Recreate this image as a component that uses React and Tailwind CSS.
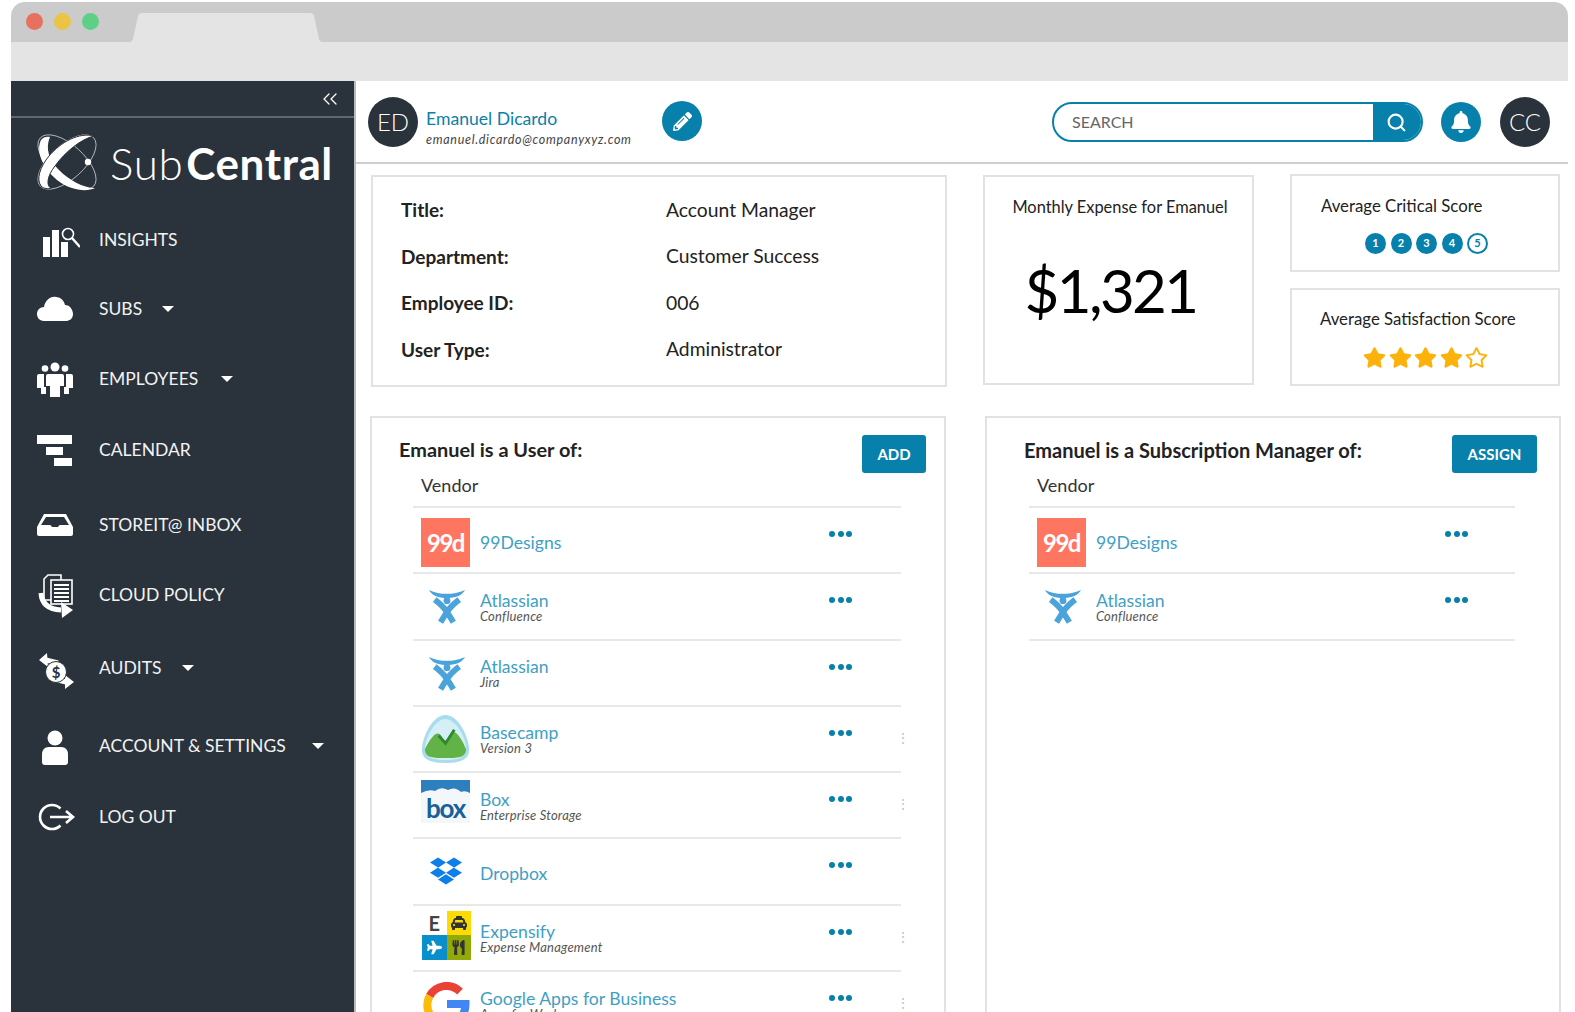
import { ChevronsLeft, Search } from 'lucide-react';
import { FaBell, FaDropbox, FaPencilAlt, FaPlane, FaStar, FaRegStar, FaTaxi, FaUtensils } from 'react-icons/fa';

const DARK = '#2a323b';

function SubLogo() {
  return (
    <svg viewBox="0 0 75 75" className="w-[75px] h-[75px] shrink-0">
      <ellipse cx="36" cy="38" rx="36" ry="17" transform="rotate(-42 36 38)" fill="none" stroke="#c9ccd0" strokeWidth="0.8" />
      <ellipse cx="36" cy="38" rx="36" ry="17" transform="rotate(42 36 38)" fill="none" stroke="#c9ccd0" strokeWidth="0.8" />
      <path d="M10 16 C5 26 10 42 26 56 C40 67 56 68 64 64 C52 64 38 56 28 46 C18 36 14 24 19 13 C16 12 12 13 10 16Z" fill="#fff" />
      <path d="M63 12 C48 8 30 18 18 32 C9 43 5 55 10 62 C13 65 17 65 20 64 C15 62 16 52 24 42 C34 28 50 15 63 12Z" fill="#fff" stroke={DARK} strokeWidth="1" />
      <circle cx="57" cy="38" r="3.2" fill="#fff" />
    </svg>
  );
}

function NavIcon({ name }) {
  if (name === 'insights') return (
    <svg viewBox="0 0 44 44" className="w-[44px] h-[44px] shrink-0" fill="#fff">
      <rect x="7" y="19" width="7" height="20" />
      <rect x="16" y="12" width="7" height="27" />
      <rect x="25" y="24" width="7" height="15" />
      <circle cx="32" cy="16" r="5.5" fill={DARK} stroke="#fff" strokeWidth="1.6" />
      <path d="M36 20 L44 29" stroke="#fff" strokeWidth="2.4" />
    </svg>
  );
  if (name === 'subs') return (
    <svg viewBox="0 0 44 44" className="w-[44px] h-[44px] shrink-0" fill="#fff">
      <path d="M8 34 C3 34 1 30 1 27 C1 23 4 20 8 20 C9 14 14 9 20 10 C25 10 28 14 29 18 C34 18 37 23 37 27 C37 32 33 34 30 34Z" />
    </svg>
  );
  if (name === 'employees') return (
    <svg viewBox="0 0 44 44" className="w-[44px] h-[44px] shrink-0" fill="#fff">
      <circle cx="19" cy="10" r="4.5" />
      <circle cx="9" cy="11.5" r="3.3" />
      <circle cx="29" cy="11.5" r="3.3" />
      <path d="M12 17 H26 Q28 17 28 19 V29 H24 V40 H14 V29 H10 V19 Q10 17 12 17Z" />
      <path d="M3 17 H8 V30 H10 V37 H5 V31 H1 V19 Q1 17 3 17Z" />
      <path d="M35 17 H30 V30 H28 V37 H33 V31 H37 V19 Q37 17 35 17Z" />
    </svg>
  );
  if (name === 'calendar') return (
    <svg viewBox="0 0 44 44" className="w-[44px] h-[44px] shrink-0" fill="#fff">
      <rect x="1" y="7" width="35" height="9" />
      <rect x="10" y="19" width="17" height="8" />
      <rect x="18" y="30" width="18" height="8" />
    </svg>
  );
  if (name === 'inbox') return (
    <svg viewBox="0 0 44 44" className="w-[44px] h-[44px] shrink-0">
      <path d="M8 11 H30 L37 24 V31 Q37 33 35 33 H3 Q1 33 1 31 V24Z" fill="#fff" />
      <path d="M10 14 H28 L33 22 H24 Q23 22 22 24 H16 Q15 22 14 22 H5Z" fill={DARK} />
    </svg>
  );
  if (name === 'policy') return (
    <svg viewBox="0 0 44 50" className="w-[44px] h-[50px] shrink-0">
      <path d="M8 9 L12 5 H25 V30 H8Z" fill={DARK} stroke="#fff" strokeWidth="1.6" />
      <rect x="15" y="10" width="21" height="24" fill={DARK} stroke="#fff" strokeWidth="1.6" />
      <path d="M18 15 H33 M18 19 H33 M18 23 H33 M18 27 H33 M18 31 H33" stroke="#fff" strokeWidth="2" />
      <path d="M5 23 Q6 39 25 40" fill="none" stroke="#fff" strokeWidth="5" />
      <path d="M25 32 L37 40 L26 48Z" fill="#fff" />
    </svg>
  );
  if (name === 'audits') return (
    <svg viewBox="0 0 44 44" className="w-[44px] h-[44px] shrink-0">
      <path d="M10 14 L22 17 M18 33 L30 36" stroke="#fff" strokeWidth="5" />
      <path d="M3 14 L11 7 L12 21Z M38 36 L29 29 L29 43Z" fill="#fff" />
      <circle cx="20" cy="26" r="10.5" fill="#fff" stroke={DARK} strokeWidth="1" />
      <text x="20" y="31.5" textAnchor="middle" fontSize="15" fontWeight="700" fill={DARK} fontFamily="Lato, sans-serif">$</text>
    </svg>
  );
  if (name === 'account') return (
    <svg viewBox="0 0 44 44" className="w-[44px] h-[44px] shrink-0" fill="#fff">
      <circle cx="19" cy="14" r="7.5" />
      <path d="M13 23 H25 Q32 23 32 31 V38 Q32 41 29 41 H9 Q6 41 6 38 V31 Q6 23 13 23Z" />
    </svg>
  );
  return (
    <svg viewBox="0 0 44 44" className="w-[44px] h-[44px] shrink-0" fill="none" stroke="#fff" strokeWidth="2.6">
      <path d="M24.5 13.5 A12 12 0 1 0 24.5 30.5" />
      <path d="M14 22 H36 M30 16 L37 22 L30 28" />
    </svg>
  );
}

const NAV = [
  { icon: 'insights', label: 'INSIGHTS', cls: 'mt-[19px]' },
  { icon: 'subs', label: 'SUBS', caret: 'ml-[1px]', cls: 'mt-[25px]' },
  { icon: 'employees', label: 'EMPLOYEES', caret: 'ml-[4px]', cls: 'mt-[26px]' },
  { icon: 'calendar', label: 'CALENDAR', cls: 'mt-[27px]' },
  { icon: 'inbox', label: 'STOREIT@ INBOX', cls: 'mt-[31px]' },
  { icon: 'policy', label: 'CLOUD POLICY', cls: 'mt-[26px]' },
  { icon: 'audits', label: 'AUDITS', caret: 'ml-[2px]', cls: 'mt-[29px]' },
  { icon: 'account', label: 'ACCOUNT & SETTINGS', caret: 'ml-[7px]', cls: 'mt-[34px]' },
  { icon: 'logout', label: 'LOG OUT', cls: 'mt-[27px]' },
];

function Sidebar() {
  return (
    <aside className="w-[345px] shrink-0 bg-[#2a323b] border-r-2 border-[#b9bbbd] text-white">
      <div className="h-[37px] flex items-center justify-end pr-[12px] border-b-2 border-[#62676d]">
        <ChevronsLeft size={24} strokeWidth={1.3} />
      </div>
      <div className="flex items-center pl-[20px] mt-[6px] h-[75px]">
        <SubLogo />
        <div className="ml-[4px] mt-[3px] text-[44px] leading-none tracking-[0.6px]">
          <span className="font-light">Sub</span><span className="font-bold ml-[3px]">Central</span>
        </div>
      </div>
      <nav>
        {NAV.map(n => (
          <div key={n.label} className={`${n.cls} h-[44px] flex items-center pl-[25px] gap-[19px]`}>
            <NavIcon name={n.icon} />
            <span className="text-[17.5px] text-[#f2f3f4] whitespace-nowrap">{n.label}</span>
            {n.caret && <span className={`${n.caret} w-0 h-0 border-x-[6px] border-x-transparent border-t-[6px] border-t-white`} />}
          </div>
        ))}
      </nav>
    </aside>
  );
}

function Avatar({ text }) {
  return (
    <div className="w-[50px] h-[50px] rounded-full bg-[#2a323b] text-white flex items-center justify-center text-[24px] font-light shrink-0">
      {text}
    </div>
  );
}

function Header() {
  return (
    <header className="h-[83px] pt-[1px] border-b-2 border-[#cfcfcf] flex items-center pl-[12px] pr-[18px]">
      <Avatar text="ED" />
      <div className="ml-[8px] mt-[12px] w-[236px]">
        <div className="text-[17.6px] leading-[22px] text-[#0a80ab]">Emanuel Dicardo</div>
        <div className="text-[12.5px] leading-[19px] italic text-[#444] tracking-[0.7px]">emanuel.dicardo@companyxyz.com</div>
      </div>
      <div className="w-[40px] h-[40px] -mt-[2px] rounded-full bg-[#0780ab] text-white flex items-center justify-center">
        <FaPencilAlt size={19} />
      </div>
      <div className="ml-auto w-[371px] h-[40px] rounded-full border-2 border-[#0780ab] flex overflow-hidden">
        <div className="flex-1 pl-[18px] flex items-center text-[16px] text-[#666]">SEARCH</div>
        <div className="w-[48px] bg-[#0780ab] text-white flex items-center pl-[13px]">
          <Search size={21} strokeWidth={2.4} />
        </div>
      </div>
      <div className="ml-[18px] w-[40px] h-[40px] rounded-full bg-[#0780ab] text-white flex items-center justify-center">
        <FaBell size={22} />
      </div>
      <div className="ml-[19px]"><Avatar text="CC" /></div>
    </header>
  );
}

const FIELDS = [
  ['Title:', 'Account Manager'],
  ['Department:', 'Customer Success'],
  ['Employee ID:', '006'],
  ['User Type:', 'Administrator'],
];

function InfoCards() {
  return (
    <div className="flex items-start pl-[15px] pt-[10px]">
      <div className="w-[576px] h-[212px] mt-px border-2 border-[#e2e2e2] pl-[28px] pt-[10px]">
        {FIELDS.map(([k, v]) => (
          <div key={k} className="flex h-[46.5px] items-center text-[#222]">
            <span className="w-[265px] text-[19px] font-bold">{k}</span>
            <span className="text-[19.3px]">{v}</span>
          </div>
        ))}
      </div>
      <div className="ml-[36px] w-[271px] h-[210px] mt-px border-2 border-[#e2e2e2] text-center">
        <div className="mt-[18px] pl-[3px] text-[16.4px] text-[#222]">Monthly Expense for Emanuel</div>
        <div className="mt-[30px] text-[60px] leading-[80px] tracking-[-2.6px] text-black pr-[16px]">$1,321</div>
      </div>
      <div className="ml-[36px] w-[270px]">
        <div className="h-[98px] border-2 border-[#e2e2e2] pl-[29px] pt-[17px]">
          <div className="text-[16.8px] text-[#222]">Average Critical Score</div>
          <div className="mt-[15px] ml-[44px] flex gap-[4.5px]">
            {[1, 2, 3, 4].map(n => (
              <span key={n} className="w-[21px] h-[21px] rounded-full bg-[#0780ab] text-white text-[11px] font-bold flex items-center justify-center">{n}</span>
            ))}
            <span className="w-[21px] h-[21px] rounded-full border-2 border-[#0780ab] text-[#0780ab] text-[11px] font-bold flex items-center justify-center">5</span>
          </div>
        </div>
        <div className="mt-[16px] h-[98px] border-2 border-[#e2e2e2] pl-[28px] pt-[16px]">
          <div className="text-[16.8px] text-[#222]">Average Satisfaction Score</div>
          <div className="mt-[15px] ml-[43px] flex gap-[2.5px] text-[#fcb20b]">
            {[1, 2, 3, 4].map(n => <FaStar key={n} size={23} />)}
            <FaRegStar size={23} />
          </div>
        </div>
      </div>
    </div>
  );
}

function AtlassianLogo() {
  return (
    <svg viewBox="0 0 50 50" className="w-[49px] h-[49px]">
      <path d="M8 6 Q26 14 45 6 Q42 11 36 13 Q26 16 17 13 Q11 11 8 6Z" fill="#4ba3dc" />
      <circle cx="26.5" cy="17" r="3.5" fill="#4ba3dc" />
      <path d="M14 16 Q22 22 26 28 Q30 34 33 39 M39 16 Q31 22 27 28 Q23 34 20 39" fill="none" stroke="#4ba3dc" strokeWidth="6" />
    </svg>
  );
}

function BasecampLogo() {
  return (
    <svg viewBox="0 0 50 50" className="w-[49px] h-[49px] -mt-[2px]">
      <path d="M25 0 C38 0 49 22 49 36 C49 46 39 49 25 49 C11 49 1 46 1 36 C1 22 12 0 25 0Z" fill="#a9dcec" />
      <path d="M25 4 C35 4 46 22 46 35 C46 44 37 46 25 46 C13 46 4 44 4 35 C4 22 15 4 25 4Z" fill="#d5eff6" />
      <path d="M4 35 C8 27 13 19 17 19 C21 19 22 26 25 26 C28 26 29 17 33 17 C37 17 43 27 46 35 C46 44 37 44 25 44 C13 44 4 44 4 35Z" fill="#62b347" />
      <path d="M18 21 L25 29 L34 15" fill="none" stroke="#2f8a2e" strokeWidth="3" />
    </svg>
  );
}

function BoxLogo() {
  return (
    <div className="w-[49px] h-[43px] -mt-[3px] bg-[#f4f7f9] overflow-hidden">
      <svg viewBox="0 0 49 43" className="w-[49px] h-[43px]">
        <path d="M0 0 H49 V13 Q44 10 40 12 Q34 6 27 10 Q20 6 14 11 Q8 9 0 13Z" fill="#2e7fbd" />
        <text x="24.5" y="38" textAnchor="middle" fontSize="26" fontWeight="700" fill="#17609b" letterSpacing="-1.2" fontFamily="Lato, sans-serif">box</text>
      </svg>
    </div>
  );
}

function ExpensifyLogo() {
  return (
    <div className="w-[49px] h-[49px] -mt-[5px] ml-[1px] grid grid-cols-2 grid-rows-2 text-white">
      <span className="flex items-center justify-center text-[#444] text-[20px] font-bold">E</span>
      <span className="flex items-center justify-center bg-[#fbdb03] text-[#333]"><FaTaxi size={16} /></span>
      <span className="flex items-center justify-center bg-[#0b8fcb]"><FaPlane size={15} /></span>
      <span className="flex items-center justify-center bg-[#93a908] text-[#333]"><FaUtensils size={15} /></span>
    </div>
  );
}

function GoogleLogo() {
  return (
    <svg viewBox="0 0 49 49" className="w-[49px] h-[49px] ml-[2px]" fill="none" strokeWidth="8">
      <path d="M37 9.6 A19 19 0 0 0 6.7 14" stroke="#ea4335" />
      <path d="M6.7 14 A19 19 0 0 0 6.7 32" stroke="#fbbc05" />
      <path d="M6.7 32 A19 19 0 0 0 37 36.4" stroke="#34a853" />
      <path d="M24 22 H42.5 Q42.5 31 37 36.4" stroke="#4285f4" />
    </svg>
  );
}

function VendorLogo({ type }) {
  if (type === '99d') return (
    <div className="w-[49px] h-[49px] bg-[#fe7560] text-white flex items-center justify-center text-[24px] font-bold tracking-[-1.5px]">99d</div>
  );
  if (type === 'atlassian') return <AtlassianLogo />;
  if (type === 'basecamp') return <BasecampLogo />;
  if (type === 'box') return <BoxLogo />;
  if (type === 'dropbox') return <div className="w-[49px] h-[49px] -mt-[3px] flex items-center justify-center text-[#0d7fe8]"><FaDropbox size={32} /></div>;
  if (type === 'expensify') return <ExpensifyLogo />;
  return <GoogleLogo />;
}

function VendorRow({ row, dotsCls }) {
  return (
    <div className="relative h-[66.3px] border-b-2 border-[#e8e8e8] flex items-start">
      <div className="ml-[8px] mt-[10px] w-[49px] shrink-0"><VendorLogo type={row.logo} /></div>
      <div className={`ml-[10px] h-[64px] ${row.sub ? 'pt-[1px]' : 'pt-[5px]'} flex flex-col justify-center`}>
        <div className="text-[17.6px] leading-[19px] text-[#3f9fc5]">{row.name}</div>
        {row.sub && <div className="text-[13px] leading-[13px] italic text-[#555] tracking-[0.2px]">{row.sub}</div>}
      </div>
      <div className={`${dotsCls} ml-auto mt-[23px] flex gap-[2.5px]`}>
        <span className="w-[6px] h-[6px] rounded-full bg-[#0780ab]" />
        <span className="w-[6px] h-[6px] rounded-full bg-[#0780ab]" />
        <span className="w-[6px] h-[6px] rounded-full bg-[#0780ab]" />
      </div>
      {row.kebab && <span className="absolute -right-[9px] top-[20px] text-[14px] text-[#c4c4c4]">⋮</span>}
    </div>
  );
}

const USER_ROWS = [
  { logo: '99d', name: '99Designs' },
  { logo: 'atlassian', name: 'Atlassian', sub: 'Confluence' },
  { logo: 'atlassian', name: 'Atlassian', sub: 'Jira' },
  { logo: 'basecamp', name: 'Basecamp', sub: 'Version 3', kebab: true },
  { logo: 'box', name: 'Box', sub: 'Enterprise Storage', kebab: true },
  { logo: 'dropbox', name: 'Dropbox' },
  { logo: 'expensify', name: 'Expensify', sub: 'Expense Management', kebab: true },
  { logo: 'google', name: 'Google Apps for Business', sub: 'Apps for Work', kebab: true },
];

function App() {
  return (
    <div className="h-[1012px] overflow-hidden bg-white pt-[2px] pl-[11px] pr-[7px] font-['Lato',sans-serif]">
      {/* browser chrome */}
      <div className="h-[40px] rounded-t-[14px] bg-[#cbcbcb] flex items-center pl-[15px]">
        <div className="flex gap-[11px] -mt-[1px]">
          <span className="w-[17px] h-[17px] rounded-full bg-[#e8705f]" />
          <span className="w-[17px] h-[17px] rounded-full bg-[#eac545]" />
          <span className="w-[17px] h-[17px] rounded-full bg-[#5dcf87]" />
        </div>
        <svg viewBox="0 0 194 29" className="w-[194px] h-[29px] ml-[30px] self-end">
          <path d="M0 29 Q3 29 4 26 L9 3 Q10 0 13 0 H181 Q184 0 185 3 L190 26 Q191 29 194 29Z" fill="#e4e4e4" />
        </svg>
      </div>
      <div className="h-[39px] bg-[#e4e4e4]" />

      <div className="flex h-[931px]">
        <Sidebar />
        <main className="flex-1 min-w-0">
          <Header />
          <InfoCards />
          <div className="flex pl-[14px] mt-[29px]">
            <section className="w-[576px] h-[640px] border-2 border-b-0 border-[#e2e2e2]">
              <div className="flex justify-between pl-[27px] pr-[18px] pt-[17px]">
                <h2 className="text-[19.9px] font-bold text-[#222]">Emanuel is a User of:</h2>
                <button className="w-[64px] h-[38px] rounded-[3px] bg-[#0780ab] text-white text-[15px] font-bold">ADD</button>
              </div>
              <div className="h-[33px] pl-[49px] text-[18px] leading-[24px] text-[#333]">Vendor</div>
              <div className="ml-[41px] w-[488px] border-t-2 border-[#e8e8e8]">
                {USER_ROWS.map(r => <VendorRow key={r.name + r.sub} row={r} dotsCls="mr-[49px]" />)}
              </div>
            </section>
            <section className="ml-[39px] w-[576px] h-[640px] border-2 border-b-0 border-[#e2e2e2]">
              <div className="flex justify-between pl-[37px] pr-[22px] pt-[17px]">
                <h2 className="text-[20px] font-bold text-[#222]">Emanuel is a Subscription Manager of:</h2>
                <button className="w-[85px] h-[38px] rounded-[3px] bg-[#0780ab] text-white text-[15px] font-bold">ASSIGN</button>
              </div>
              <div className="h-[33px] pl-[50px] text-[18px] leading-[24px] text-[#333]">Vendor</div>
              <div className="ml-[42px] w-[486px] border-t-2 border-[#e8e8e8]">
                {USER_ROWS.slice(0, 2).map(r => <VendorRow key={r.name + r.sub} row={r} dotsCls="mr-[47px]" />)}
              </div>
            </section>
          </div>
        </main>
      </div>
    </div>
  );
}

export default App;
